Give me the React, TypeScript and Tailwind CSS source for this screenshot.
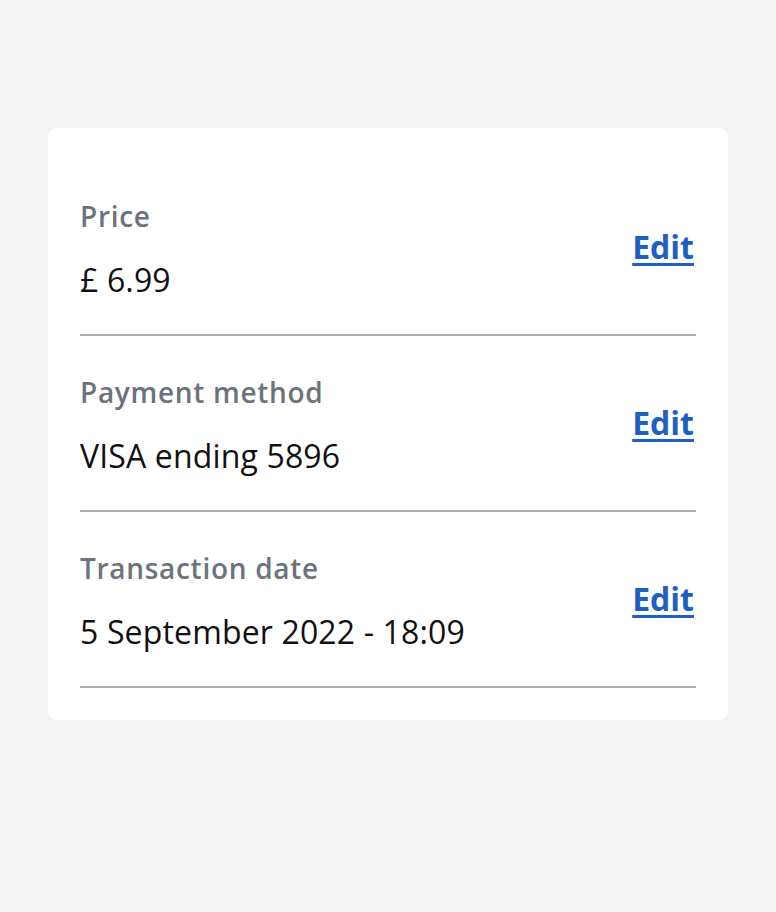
const rows = [
  { label: "Price", value: "£ 6.99" },
  { label: "Payment method", value: "VISA ending 5896" },
  { label: "Transaction date", value: "5 September 2022 - 18:09" },
];

export default function App() {
  return (
    <div className="min-h-[912px] w-full bg-[#f3f3f3] pt-32 px-12 font-['Open_Sans',sans-serif]">
      <div className="rounded-lg bg-white p-8">
        {rows.map((row) => (
          <div
            key={row.label}
            className="flex items-center justify-between border-b-2 border-[#a9abb3] pt-10 pb-[34px]"
          >
            <div>
              <div className="text-[28px] leading-8 font-semibold tracking-[0.7px] text-[#6c737d]">
                {row.label}
              </div>
              <div className="mt-7 text-[32px] leading-10 tracking-[0.15px] text-[#111111]">
                {row.value}
              </div>
            </div>
            <a
              href="#"
              className="mb-1.5 pr-0.5 text-[32px] leading-10 font-bold text-[#1f5fc1] underline underline-offset-4"
            >
              Edit
            </a>
          </div>
        ))}
      </div>
    </div>
  );
}
